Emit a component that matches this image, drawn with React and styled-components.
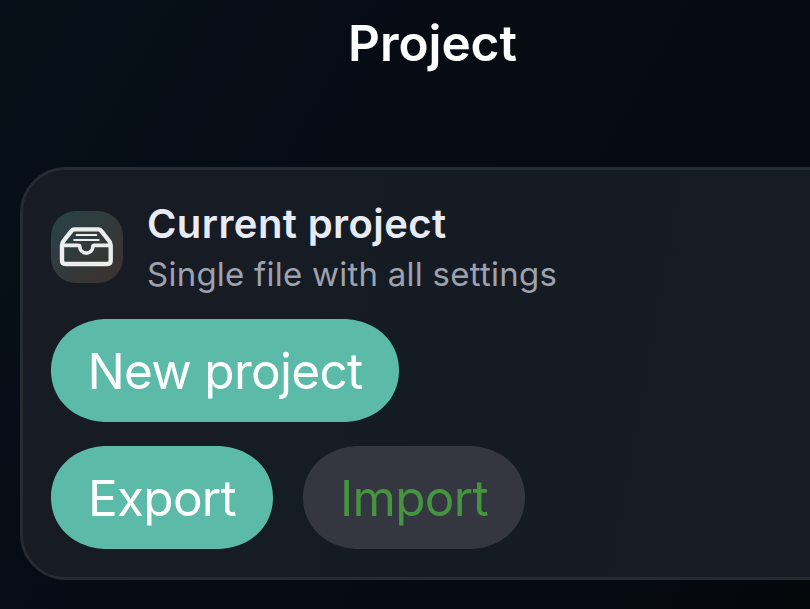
import styled, { createGlobalStyle } from "styled-components";

const GlobalStyle = createGlobalStyle`
    * {
        box-sizing: border-box;
    }
    body {
        margin: 0;
        background: #050912;
        overflow: hidden;
        font-family: Inter, "Liberation Sans", sans-serif;
    }
`;
const Screen = styled.div`
    display: flex;
    flex-direction: column;
    width: 810px;
    height: 609px;
    overflow: hidden;
    background: linear-gradient(120deg, #071018 0%, #060b14 45%, #060a12 80%, #04080b 100%);
`;
const Header = styled.header`
    flex: none;
    height: 167px;
    padding: 13px 0 0 348px;
`;
const Title = styled.h1`
    margin: 0;
    font-size: 49.5px;
    line-height: 60px;
    font-weight: 580;
    letter-spacing: -0.05px;
    color: #ffffff;
`;
const Card = styled.section`
    flex: none;
    display: flex;
    flex-direction: column;
    width: 860px;
    height: 413px;
    margin-left: 20px;
    padding: 32px 28px;
    border: 3px solid #262a31;
    border-radius: 46px;
    background: linear-gradient(100deg, #171b25 0%, #151b23 50%, #161c23 100%);
    background-clip: padding-box;
`;
const CardHeader = styled.div`
    display: flex;
    align-items: center;
    height: 90px;
    gap: 24px;
`;
const IconTile = styled.div`
    flex: none;
    width: 72px;
    height: 72px;
    border-radius: 25px;
    background: linear-gradient(135deg, #29434a 0%, #323a3a 50%, #3c302e 100%);
`;
const HeaderText = styled.div`
    display: flex;
    flex-direction: column;
    padding-top: 4px;
`;
const CardTitle = styled.h2`
    margin: 0;
    font-size: 40px;
    line-height: 50px;
    font-weight: 600;
    letter-spacing: 0.4px;
    color: #e8ebf4;
`;
const CardSubtitle = styled.p`
    margin: 0;
    font-size: 33px;
    line-height: 50px;
    letter-spacing: 0.24px;
    color: #9da2ae;
`;
const ButtonList = styled.div`
    display: flex;
    flex-direction: column;
    gap: 24px;
    margin-top: 27px;
`;
const ButtonRow = styled.div`
    display: flex;
    gap: 30px;
`;
const Button = styled.button`
    width: ${(props) => (props.$wide ? "348px" : "222px")};
    height: 103px;
    padding: 0;
    border: none;
    border-radius: 52px;
    font-family: inherit;
    font-size: 49.5px;
    line-height: 60px;
    font-weight: 370;
    letter-spacing: -0.7px;
    white-space: nowrap;
    color: ${(props) => (props.$muted ? "#469440" : "#ffffff")};
    background: ${(props) => (props.$muted ? "#343740" : "#5bbaa8")};
    @supports (corner-shape: superellipse(1.06)) {
        border-radius: 57px / 51.5px;
        corner-shape: superellipse(1.06);
    }
`;

const TrayIcon = () => (
    <svg
        width="72"
        height="72"
        viewBox="0 0 72 72"
        fill="none"
        stroke="#eceeee"
        strokeWidth="4.4"
        strokeLinecap="round"
        strokeLinejoin="round"
    >
        <path d="M11 34.5V49.5Q11 53 14.5 53H56.2Q59.7 53 59.7 49.5V34.5Q59.7 32 58.2 30L50.8 20.7Q49.4 18.4 47 18.4H23.7Q21.3 18.4 19.9 20.7L12.5 30Q11 32 11 34.5Z" />
        <path
            d="M11.5 34.4H27Q28.8 34.4 28.8 35.9A6.5 6.2 0 0 0 41.8 35.9Q41.8 34.4 43.6 34.4H59.2"
            strokeWidth="3.6"
        />
        <path d="M25.6 23.9H45.3M23.2 28.9H47.7" strokeWidth="2" />
    </svg>
);

export default function App() {
    return (
        <Screen>
            <GlobalStyle />
            <Header>
                <Title>Project</Title>
            </Header>
            <Card>
                <CardHeader>
                    <IconTile>
                        <TrayIcon />
                    </IconTile>
                    <HeaderText>
                        <CardTitle>Current project</CardTitle>
                        <CardSubtitle>Single file with all settings</CardSubtitle>
                    </HeaderText>
                </CardHeader>
                <ButtonList>
                    <ButtonRow>
                        <Button $wide>New project</Button>
                    </ButtonRow>
                    <ButtonRow>
                        <Button>Export</Button>
                        <Button $muted>Import</Button>
                    </ButtonRow>
                </ButtonList>
            </Card>
        </Screen>
    );
}
